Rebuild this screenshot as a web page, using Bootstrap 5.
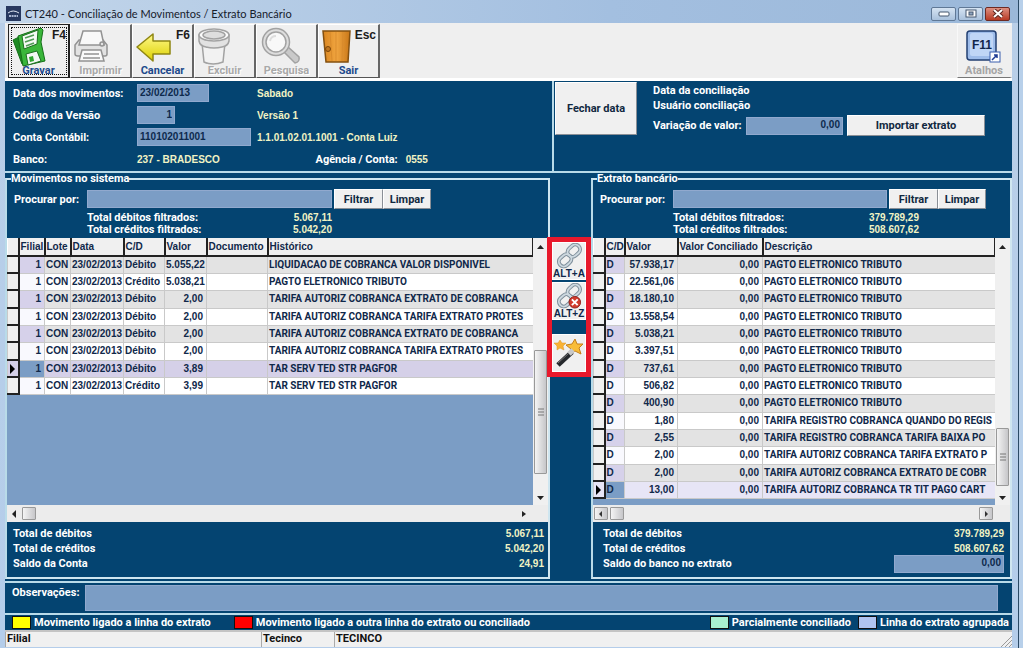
<!DOCTYPE html>
<html lang="pt-BR">
<head>
<meta charset="utf-8">
<meta name="viewport" content="width=device-width, initial-scale=1">
<title>CT240 - Conciliação de Movimentos / Extrato Bancário</title>
<link href="https://cdn.jsdelivr.net/npm/bootstrap@5.3.0/dist/css/bootstrap.min.css" rel="stylesheet">
<style>
:root{--navy:#044471;--field:#7b9dc5;--line:#b9dbe9;--cream:#f1f3c4;--sans:"Liberation Sans",Arial,sans-serif;--label:Roboto,"Liberation Sans",sans-serif}
body{font:bold 11px/15px var(--label);color:#fff;background:#b8d0ea}
.win{min-height:100vh;padding:0 6px 1px 5px;margin-right:4px;border-right:1px solid #2b4a66;background:linear-gradient(#b9cfe8,#b4cdea)}
.titlebar{height:23px;background:linear-gradient(90deg,#c3d6ea,#a3bfe0 60%,#9bb8d9);font:11px/15px Lato,sans-serif;color:#16202c;margin:0 -6px 0 -5px;padding:6px 8px 0 6px}
.capbtn{width:25px;height:14px;border:1px solid #5f7896;border-radius:2px;background:linear-gradient(#d5e3f2,#a9c1dc);padding:0;display:flex;align-items:center;justify-content:center}
.capbtn.close-x{background:linear-gradient(#dd8f80,#b83a25);border-color:#6e2a22}
.tools{height:58px;background:#efefef;padding:1px 0 0 3px;border-bottom:3px solid #fff}
.tool{width:62px;height:54px;background:#efefef;border:1px solid;border-color:#fff #666 #555 #fff;border-right-width:2px;padding:0;position:relative;font:bold 11px/12px var(--label);color:#1d4a8c;display:flex;flex-direction:column;align-items:center;justify-content:flex-end}
.tool svg{position:absolute;left:3px;top:2px}
.tool kbd{position:absolute;right:2px;top:4px;padding:0;background:none;color:#1c1c1c;font:bold 12px/12px var(--sans)}
.tool:disabled{color:#a9a9a9;text-shadow:1px 1px #fff}
.tool.focused{border-color:#222;outline:1px dotted #111;outline-offset:-4px}
.tool.keys{width:55px;border-color:#f8f8f8 #efefef #777 #f8f8f8;color:#a5a5a5}
.tool.keys svg{left:7px}
.navy{background:var(--navy)}
.box{border:0 solid var(--line)}
.fld{background:var(--field);border:1px solid #91a9ce;color:#0d2a4d;font:bold 10px/14px var(--sans);padding:0 2px 2px;height:18px;border-radius:0;min-width:0;display:block}
.cream{color:var(--cream);font-family:var(--sans);font-size:10px}
.info{display:grid;grid-template-columns:124px 120px auto 1fr;grid-auto-rows:22px;align-items:center;padding:1px 0 0 8px;height:90px}
.face{background:#f0f0f0;border:1px solid;border-color:#fff #8a8f96 #8a8f96 #fff;color:#10283f;font:inherit;padding:0;border-radius:0}
.head-grid{display:grid;grid-template-columns:minmax(0,547fr) minmax(0,460fr);border-bottom:2px solid var(--line)}
.main-grid{display:grid;grid-template-columns:minmax(0,545fr) 41px minmax(0,421fr);background:var(--navy);padding-bottom:2px}
.panel{border:2px solid #cfe6f0;border-left-color:var(--line);min-width:0;display:flex;flex-direction:column}
.panel legend{float:none;width:auto;margin:0 0 0 4px;padding:0;font:inherit;line-height:12px}
.sums{line-height:12px}
.grid-area{background:var(--field);min-width:0;flex:1 1 0;overflow:hidden}
.grid-table{table-layout:fixed;width:100%;border-collapse:collapse;color:#10284a;font:bold 10px/14px var(--sans);background:#fff}
.grid-table th{background:#f0f0f0;height:18px;border-right:2px solid #222;border-bottom:2px solid #222;padding:0 0 0 1px;white-space:nowrap;overflow:hidden}
.grid-table th:last-child{border-right-width:1px}
.grid-table td{height:17px;padding:0 3px 0 1px;white-space:nowrap;overflow:hidden;border:1px solid #c9c9c9;border-top:0}
.grid-table td:last-child{padding-right:0;border-right:0;font-family:var(--label)}
.grid-table tr:nth-child(3n) td{height:18px}
.grid-table tbody tr:nth-child(odd) td{background:#e3e3e3}
.grid-table tbody tr:nth-child(odd) td:nth-child(2){background:#d6d1ea}
.grid-table tbody tr td:nth-child(2){background:#f9f9fe}
.grid-table tbody tr td:first-child,.grid-table tbody tr:nth-child(odd) td:first-child{background:#f0f0f0;border-right:2px solid #222;border-bottom:2px solid #222;padding:0}
.grid-table.left-table tbody tr.current td{background:#d5d0e8}
.grid-table.right-table tbody tr.current td{background:#e7e5f6}
.grid-table tbody tr.current td:nth-child(2){background:var(--field)!important}
.ptr{display:block;width:0;height:0;margin-left:2px;border:5px solid transparent;border-left-color:#000;border-right:0}
.vbar{width:15px;background:#f0f0f0;display:flex;flex-direction:column;align-items:center;flex:none}
.hbar{height:17px;background:#ececec;display:flex;align-items:center;padding:0 0 0 3px}
.thumb{background:linear-gradient(90deg,#f4f4f4,#c6c6c9);border:1px solid #999;border-radius:1px;display:flex;align-items:center;justify-content:center}
.strip{border:5px solid #e8192c;background:var(--navy);margin:64px 0 0 -3px;z-index:1;align-self:start;position:relative}
.strip button{display:block;width:100%;height:38px;border:1px solid #fff;background:#f0f0f0;padding:0;margin-bottom:2px;color:#10284a;font:bold 10px/10px var(--sans);white-space:nowrap}
.strip svg{display:block;margin:auto}
.sw{width:19px;height:13px;border:1px solid #111;flex:none}
.status{background:#f0f0f0;color:#111;line-height:14px;height:17px;border-top:2px solid #c4c4c4}
.status>div{border-left:1px solid #aaa;padding-left:1px}
</style>
</head>
<body>
<div class="win d-flex flex-column">
  <header class="titlebar d-flex align-items-start">
    <svg width="15" height="15" class="me-1 flex-shrink-0" viewBox="0 0 15 15"><rect width="15" height="15" fill="#27385f"/><path d="M2 7q5-4 11 0" stroke="#dfe6f2" fill="none"/><path d="M3 10h9" stroke="#a8b5d0" stroke-width="2" stroke-dasharray="2 .6"/></svg>
    <span>CT240 - Conciliação de Movimentos / Extrato Bancário</span>
    <div class="d-flex ms-auto" style="gap:2px;padding-top:1px">
      <button class="capbtn" aria-label="Minimizar"><svg width="12" height="6"><rect x="1" y="1" width="10" height="4" rx="1" fill="#fff" stroke="#44576e"/></svg></button>
      <button class="capbtn" aria-label="Maximizar"><svg width="12" height="10"><rect x="1" y="1" width="10" height="7" fill="#fff" stroke="#44576e"/><rect x="4" y="3" width="4" height="3" fill="#8fa5bf" stroke="#44576e"/></svg></button>
      <button class="capbtn close-x" aria-label="Fechar"><svg width="12" height="10"><path d="M2 1l8 7M10 1L2 8" stroke="#5b2520" stroke-width="4"/><path d="M2 1l8 7M10 1L2 8" stroke="#fff" stroke-width="2"/></svg></button>
    </div>
  </header>

  <nav class="tools d-flex">
    <button class="tool focused"><svg width="36" height="40" viewBox="0 0 36 40"><path d="M1 13L9 9l4 29-3-1z" fill="#1c8a22" stroke="#157018"/><path d="M6 9L29 1l2 2-2 12 4 19-22 5-2-12z" fill="#3ab63a" stroke="#157018"/><path d="M10 9L26 3l-1 14-13 5z" fill="#f4faf4" stroke="#1b6e1e"/><path d="M13 11l9-3M13 15l9-3M14 19l8-3" stroke="#4f9a55" stroke-width="1.500"/><path d="M14 27l11-3 4 10-13 4z" fill="#f4f8f4" stroke="#1b6e1e"/><path d="M17 30l4-1 1 5-4 1z" fill="#2fa52f"/></svg><kbd>F4</kbd>Gravar</button>
    <button class="tool" disabled><svg width="36" height="36" viewBox="0 0 36 36" stroke="#929292" stroke-width="1.5" fill="#e2e2e2"><path d="M5 13h24l4 5v9q0 2-2 2H4q-3 0-3-2v-9z"/><path d="M9 4h18l3 14H5z" fill="#f8f8f8"/><circle cx="28" cy="17" r="2"/><path d="M8 23h19l3 11H5z" fill="#fafafa"/><path d="M10 27h15M9 31h17"/></svg>Imprimir</button>
    <button class="tool"><svg width="36" height="36" viewBox="0 0 36 36"><defs><linearGradient id="yl" x2="0" y2="1"><stop stop-color="#fff98a"/><stop offset="1" stop-color="#dcd000"/></linearGradient></defs><path d="M1 20L17 7v7h17v13H17v7z" fill="url(#yl)" stroke="#8f8612" stroke-width="1.5" stroke-linejoin="round"/></svg><kbd>F6</kbd>Cancelar</button>
    <button class="tool" disabled><svg width="36" height="38" viewBox="0 0 36 38" stroke="#a2a2a2" stroke-width="1.5" fill="#f2f2f2"><path d="M4 16l2 19q9 4 19 0l2-19z"/><path d="M1 8v6q1 5 7 6 8 2 16 0 6-1 7-6V8z" fill="#e2e2e2"/><ellipse cx="16" cy="8" rx="15" ry="6" fill="#fafafa"/><ellipse cx="16" cy="8" rx="11" ry="4" fill="#dedede"/></svg>Excluir</button>
    <button class="tool" disabled><svg width="42" height="38" viewBox="0 0 42 38" stroke="#a2a2a2" stroke-width="1.500"><path d="M23 24l5-4 11 10q1 5-4 6z" fill="#c9c9c9"/><circle cx="16" cy="15" r="13.500" fill="#ddd"/><circle cx="16" cy="15" r="10" fill="#f8f8f8"/><path d="M10 14q1-5 6-5" fill="none" stroke="#ddd" stroke-width="2"/></svg>Pesquisa</button>
    <button class="tool"><svg width="32" height="38" viewBox="0 0 32 38"><defs><linearGradient id="wd"><stop stop-color="#d9851f"/><stop offset=".5" stop-color="#f0a540"/><stop offset="1" stop-color="#c97718"/></linearGradient></defs><path d="M1 4h27l-2 31H4z" fill="url(#wd)" stroke="#84500f" stroke-width="1.500"/><path d="M8 5l2 29M14 5v29M21 5l-1 29" stroke="#d98b2c"/><circle cx="6" cy="22" r="2.500" fill="#c0761f" stroke="#7b4508"/></svg><kbd>Esc</kbd>Sair</button>
    <button class="tool keys ms-auto"><svg width="38" height="36" viewBox="0 0 38 36"><rect x="2" y="4" width="29" height="29" rx="3" fill="#9fbdea" stroke="#223f72" stroke-width="1.500"/><rect x="5" y="6" width="23" height="23" rx="2" fill="#c0d6f6"/><text x="17" y="22" text-anchor="middle" font-size="12" font-family="Liberation Sans" fill="#10254a">F11</text><rect x="25" y="25" width="10" height="10" fill="#fff" stroke="#3b5fae"/><path d="M27 33l5-5M29 28h3v3" stroke="#1f3c94" stroke-width="1.500" fill="none"/></svg>Atalhos</button>
  </nav>

  <section class="head-grid navy">
    <div class="info">
      <label for="dt">Data dos movimentos:</label><input id="dt" class="fld" style="width:72px" value="23/02/2013"><span class="cream">Sabado</span><span></span>
      <label for="ver">Código da Versão</label><input id="ver" class="fld text-end" style="width:38px" value="1"><span class="cream">Versão 1</span><span></span>
      <label for="conta">Conta Contábil:</label><input id="conta" class="fld" style="width:114px" value="110102011001"><span class="cream">1.1.01.02.01.1001 - Conta Luiz</span><span></span>
      <span>Banco:</span><span class="cream">237 - BRADESCO</span><span class="text-end">Agência / Conta:</span><span class="cream ps-2">0555</span>
    </div>
    <div class="box d-flex align-items-start" style="border-left-width:2px;padding:1px 0 0 1px">
      <button class="face" style="width:82px;height:53px">Fechar data</button>
      <div class="flex-grow-1" style="padding:1px 27px 0 16px">
        <div>Data da conciliação</div>
        <div>Usuário conciliação</div>
        <div class="d-flex align-items-center" style="height:21px;margin-top:2px">
          <label for="vv" class="text-nowrap">Variação de valor:</label>
          <input id="vv" class="fld text-end flex-grow-1 mx-1" style="width:60px" value="0,00">
          <button class="face flex-shrink-0" style="width:138px;height:21px">Importar extrato</button>
        </div>
      </div>
    </div>
  </section>

  <main class="main-grid flex-grow-1">
    <fieldset class="panel">
      <legend>Movimentos no sistema</legend>
      <div class="d-flex align-items-center" style="padding:4px 0 0 7px">
        <label for="p1" style="width:73px">Procurar por:</label><input id="p1" class="fld" style="width:245px">
        <button class="face" style="width:49px;height:20px;margin-left:2px">Filtrar</button><button class="face" style="width:48px;height:20px">Limpar</button>
      </div>
      <div class="sums" style="padding:3px 0 2px 80px;width:325px">
        <div class="d-flex justify-content-between"><span>Total débitos filtrados:</span><span class="cream">5.067,11</span></div>
        <div class="d-flex justify-content-between"><span>Total créditos filtrados:</span><span class="cream">5.042,20</span></div>
      </div>
      <div class="d-flex flex-grow-1">
        <div class="grid-area">
          <table class="grid-table left-table">
            <colgroup><col style="width:11px"><col style="width:26px"><col style="width:26px"><col style="width:53px"><col style="width:41px"><col style="width:42px"><col style="width:61px"><col></colgroup>
            <thead><tr><th></th><th>Filial</th><th>Lote</th><th>Data</th><th>C/D</th><th>Valor</th><th>Documento</th><th>Histórico</th></tr></thead>
            <tbody>
              <tr><td></td><td class="text-end">1</td><td>CON</td><td>23/02/2013</td><td>Débito</td><td class="text-end">5.055,22</td><td></td><td>LIQUIDACAO DE COBRANCA VALOR DISPONIVEL</td></tr>
              <tr><td></td><td class="text-end">1</td><td>CON</td><td>23/02/2013</td><td>Crédito</td><td class="text-end">5.038,21</td><td></td><td>PAGTO ELETRONICO TRIBUTO</td></tr>
              <tr><td></td><td class="text-end">1</td><td>CON</td><td>23/02/2013</td><td>Débito</td><td class="text-end">2,00</td><td></td><td>TARIFA AUTORIZ COBRANCA EXTRATO DE COBRANCA</td></tr>
              <tr><td></td><td class="text-end">1</td><td>CON</td><td>23/02/2013</td><td>Débito</td><td class="text-end">2,00</td><td></td><td>TARIFA AUTORIZ COBRANCA TARIFA EXTRATO PROTES</td></tr>
              <tr><td></td><td class="text-end">1</td><td>CON</td><td>23/02/2013</td><td>Débito</td><td class="text-end">2,00</td><td></td><td>TARIFA AUTORIZ COBRANCA EXTRATO DE COBRANCA</td></tr>
              <tr><td></td><td class="text-end">1</td><td>CON</td><td>23/02/2013</td><td>Débito</td><td class="text-end">2,00</td><td></td><td>TARIFA AUTORIZ COBRANCA TARIFA EXTRATO PROTES</td></tr>
              <tr class="current"><td><i class="ptr"></i></td><td class="text-end">1</td><td>CON</td><td>23/02/2013</td><td>Débito</td><td class="text-end">3,89</td><td></td><td>TAR SERV TED STR PAGFOR</td></tr>
              <tr><td></td><td class="text-end">1</td><td>CON</td><td>23/02/2013</td><td>Crédito</td><td class="text-end">3,99</td><td></td><td>TAR SERV TED STR PAGFOR</td></tr>
            </tbody>
          </table>
        </div>
        <div class="vbar"><svg width="7" height="18"><path d="M0 11h7L3.500 7z" fill="#222"/></svg><div style="flex:95"></div><div class="thumb" style="flex:124;width:13px"><svg width="6" height="8"><path d="M0 1h6M0 4h6M0 7h6" stroke="#777"/></svg></div><div style="flex:17"></div><svg width="7" height="14"><path d="M0 5h7L3.500 9z" fill="#222"/></svg></div>
      </div>
      <div class="hbar"><svg width="8" height="8"><path d="M6 0v8L2 4z" fill="#222"/></svg><div class="thumb" style="width:14px;height:13px;margin-left:4px"></div><svg class="ms-auto" style="margin-right:21px" width="6" height="8"><path d="M1 1v6L5 4z" fill="#222"/></svg></div>
      <div style="padding:4px 4px 6px 6px">
        <div class="d-flex justify-content-between"><span>Total de débitos</span><span class="cream">5.067,11</span></div>
        <div class="d-flex justify-content-between"><span>Total de créditos</span><span class="cream">5.042,20</span></div>
        <div class="d-flex justify-content-between"><span>Saldo da Conta</span><span class="cream">24,91</span></div>
      </div>
    </fieldset>

    <div class="strip">
      <button><svg width="28" height="26" viewBox="0 0 28 27" fill="none"><g stroke="#7f8f9b" stroke-width="4"><rect x="12" y="3" width="14" height="10" rx="5" transform="rotate(-42 19 8)"/><rect x="3" y="13" width="14" height="10" rx="5" transform="rotate(-42 10 18)"/></g><g stroke="#cdd8df" stroke-width="2"><rect x="12" y="3" width="14" height="10" rx="5" transform="rotate(-42 19 8)"/><rect x="3" y="13" width="14" height="10" rx="5" transform="rotate(-42 10 18)"/></g></svg>ALT+A</button>
      <button><svg width="28" height="26" viewBox="0 0 28 27" fill="none"><g stroke="#7f8f9b" stroke-width="4"><rect x="12" y="3" width="14" height="10" rx="5" transform="rotate(-42 19 8)"/><rect x="3" y="13" width="14" height="10" rx="5" transform="rotate(-42 10 18)"/></g><g stroke="#cdd8df" stroke-width="2"><rect x="12" y="3" width="14" height="10" rx="5" transform="rotate(-42 19 8)"/><rect x="3" y="13" width="14" height="10" rx="5" transform="rotate(-42 10 18)"/></g><circle cx="20" cy="20" r="6" fill="#d23a2c" stroke="#8f1f18"/><path d="M17 17l6 6M23 17l-6 6" stroke="#fff" stroke-width="2"/></svg>ALT+Z</button>
      <button style="margin:14px 0 0" aria-label="Conciliação automática"><svg width="30" height="34" viewBox="0 0 30 34"><path d="M21 3l2 5 6 0-4 4 2 6-6-3-5 4 1-6-5-4 6-1z" fill="#f9bd38" stroke="#c5801a"/><path d="M6 4l2 3 4 0-3 3 1 4-4-2-3 2 0-4-3-3 4 0z" fill="#f9b233" stroke="#dc9420" stroke-width=".5"/><path d="M4 29L18 16" stroke="#26292d" stroke-width="5"/><path d="M15 18l4-4" stroke="#c9c9c9" stroke-width="5"/><path d="M4 27L15 17" stroke="#777"/></svg></button>
    </div>

    <fieldset class="panel">
      <legend>Extrato bancário</legend>
      <div class="d-flex align-items-center" style="padding:4px 24px 0 7px">
        <label for="p2" style="width:73px">Procurar por:</label><input id="p2" class="fld flex-grow-1" style="width:120px">
        <button class="face" style="width:49px;height:20px;margin-left:2px">Filtrar</button><button class="face" style="width:48px;height:20px">Limpar</button>
      </div>
      <div class="sums" style="padding:3px 0 2px 80px;width:326px">
        <div class="d-flex justify-content-between"><span>Total débitos filtrados:</span><span class="cream">379.789,29</span></div>
        <div class="d-flex justify-content-between"><span>Total créditos filtrados:</span><span class="cream">508.607,62</span></div>
      </div>
      <div class="d-flex flex-grow-1">
        <div class="grid-area">
          <table class="grid-table right-table">
            <colgroup><col style="width:11px"><col style="width:20px"><col style="width:53px"><col style="width:85px"><col></colgroup>
            <thead><tr><th></th><th>C/D</th><th>Valor</th><th>Valor Conciliado</th><th>Descrição</th></tr></thead>
            <tbody>
              <tr><td></td><td>D</td><td class="text-end">57.938,17</td><td class="text-end">0,00</td><td>PAGTO ELETRONICO TRIBUTO</td></tr>
              <tr><td></td><td>D</td><td class="text-end">22.561,06</td><td class="text-end">0,00</td><td>PAGTO ELETRONICO TRIBUTO</td></tr>
              <tr><td></td><td>D</td><td class="text-end">18.180,10</td><td class="text-end">0,00</td><td>PAGTO ELETRONICO TRIBUTO</td></tr>
              <tr><td></td><td>D</td><td class="text-end">13.558,54</td><td class="text-end">0,00</td><td>PAGTO ELETRONICO TRIBUTO</td></tr>
              <tr><td></td><td>D</td><td class="text-end">5.038,21</td><td class="text-end">0,00</td><td>PAGTO ELETRONICO TRIBUTO</td></tr>
              <tr><td></td><td>D</td><td class="text-end">3.397,51</td><td class="text-end">0,00</td><td>PAGTO ELETRONICO TRIBUTO</td></tr>
              <tr><td></td><td>D</td><td class="text-end">737,61</td><td class="text-end">0,00</td><td>PAGTO ELETRONICO TRIBUTO</td></tr>
              <tr><td></td><td>D</td><td class="text-end">506,82</td><td class="text-end">0,00</td><td>PAGTO ELETRONICO TRIBUTO</td></tr>
              <tr><td></td><td>D</td><td class="text-end">400,90</td><td class="text-end">0,00</td><td>PAGTO ELETRONICO TRIBUTO</td></tr>
              <tr><td></td><td>D</td><td class="text-end">1,80</td><td class="text-end">0,00</td><td>TARIFA REGISTRO COBRANCA QUANDO DO REGIS</td></tr>
              <tr><td></td><td>D</td><td class="text-end">2,55</td><td class="text-end">0,00</td><td>TARIFA REGISTRO COBRANCA TARIFA BAIXA PO</td></tr>
              <tr><td></td><td>D</td><td class="text-end">2,00</td><td class="text-end">0,00</td><td>TARIFA AUTORIZ COBRANCA TARIFA EXTRATO P</td></tr>
              <tr><td></td><td>D</td><td class="text-end">2,00</td><td class="text-end">0,00</td><td>TARIFA AUTORIZ COBRANCA EXTRATO DE COBR</td></tr>
              <tr class="current"><td><i class="ptr"></i></td><td>D</td><td class="text-end">13,00</td><td class="text-end">0,00</td><td>TARIFA AUTORIZ COBRANCA TR TIT PAGO CART</td></tr>
            </tbody>
          </table>
        </div>
        <div class="vbar"><svg width="7" height="18"><path d="M0 11h7L3.500 7z" fill="#222"/></svg><div style="flex:174"></div><div class="thumb" style="flex:57;width:13px"><svg width="6" height="8"><path d="M0 1h6M0 4h6M0 7h6" stroke="#777"/></svg></div><div style="flex:5"></div><svg width="7" height="14"><path d="M0 5h7L3.500 9z" fill="#222"/></svg></div>
      </div>
      <div class="hbar" style="padding-left:1px"><div class="thumb" style="width:14px;height:13px"><svg width="6" height="6"><path d="M4 0v6L1 3z" fill="#333"/></svg></div><div class="thumb" style="width:14px;height:13px;margin-left:2px"></div><div class="thumb ms-auto" style="width:14px;height:13px;margin-right:17px"><svg width="6" height="6"><path d="M2 0v6L5 3z" fill="#333"/></svg></div></div>
      <div style="padding:4px 6px 6px 10px">
        <div class="d-flex justify-content-between"><span>Total de débitos</span><span class="cream">379.789,29</span></div>
        <div class="d-flex justify-content-between"><span>Total de créditos</span><span class="cream">508.607,62</span></div>
        <div class="d-flex justify-content-between align-items-center" style="height:15px"><label for="sb">Saldo do banco no extrato</label><input id="sb" class="fld text-end" style="width:110px" value="0,00"></div>
      </div>
    </fieldset>
  </main>

  <section class="box navy d-flex" style="border-width:2px 0 2px;height:34px;padding:2px 14px 0 7px">
    <label for="obs" style="width:73px">Observações:</label><textarea id="obs" class="fld flex-grow-1" style="height:26px;resize:none"></textarea>
  </section>
  <section class="navy d-flex align-items-center" style="height:15px;padding:0 3px 0 7px;gap:3px">
    <span class="sw" style="background:#ff0"></span><span>Movimento ligado a linha do extrato</span>
    <span class="sw" style="background:#f00;margin-left:20px"></span><span>Movimento ligado a outra linha do extrato ou conciliado</span>
    <span class="sw ms-auto" style="background:#a9f0d0"></span><span>Parcialmente conciliado</span>
    <span class="sw ms-1" style="background:#b0c4f0"></span><span>Linha do extrato agrupada</span>
  </section>
  <footer class="status d-flex">
    <div style="width:256px">Filial</div><div style="width:73px">Tecinco</div><div class="flex-grow-1">TECINCO</div>
    <svg width="12" height="12" class="align-self-end"><path d="M1 12L12 1M5 12l7-7M9 12l3-3" stroke="#999"/></svg>
  </footer>
</div>
<script src="https://cdn.jsdelivr.net/npm/bootstrap@5.3.0/dist/js/bootstrap.bundle.min.js"></script>
</body>
</html>
